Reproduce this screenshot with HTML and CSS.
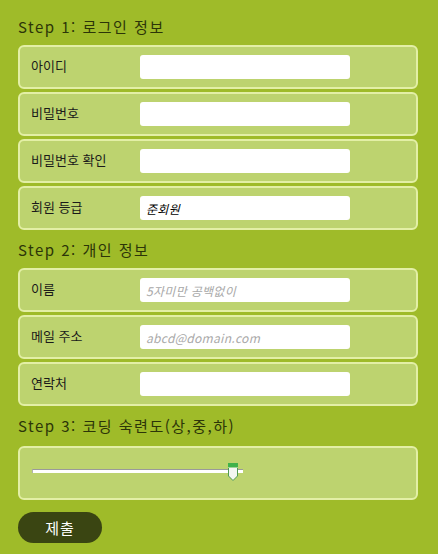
FILE: index.html
```html
<!DOCTYPE html>
<html lang="ko">
<head>
<meta charset="utf-8">
<link rel="stylesheet" href="styles.css">
</head>
<body>
<form class="form">
  <h2 class="step">Step 1: 로그인 정보</h2>
  <div class="row"><label class="lbl">아이디</label><input class="field" type="text"></div>
  <div class="row"><label class="lbl">비밀번호</label><input class="field" type="password"></div>
  <div class="row"><label class="lbl">비밀번호 확인</label><input class="field" type="password"></div>
  <div class="row"><label class="lbl">회원 등급</label><input class="field filled" type="text" value="준회원"></div>

  <h2 class="step">Step 2: 개인 정보</h2>
  <div class="row"><label class="lbl">이름</label><input class="field" type="text" placeholder="5자미만 공백없이"></div>
  <div class="row"><label class="lbl">메일 주소</label><input class="field" type="text" placeholder="abcd@domain.com"></div>
  <div class="row"><label class="lbl">연락처</label><input class="field" type="text"></div>

  <h2 class="step">Step 3: 코딩 숙련도(상,중,하)</h2>
  <div class="row slider-row">
    <div class="slider">
      <div class="track"></div>
      <svg class="thumb" width="12" height="20" viewBox="0 0 12 20">
        <path d="M1.5 1.5 H10.5 V14 L6 18.5 L1.5 14 Z" fill="#f4f6f2" stroke="#4f9a52" stroke-width="1"/>
        <rect x="1" y="1" width="10" height="4" fill="#3fb24a"/>
        <rect x="1" y="5" width="10" height="1" fill="#9fd39a"/>
      </svg>
    </div>
  </div>

  <button class="submit" type="button">제출</button>
</form>
</body>
</html>
```
FILE: styles.css
```css
html, body {
  margin: 0;
  padding: 0;
  background: #9fbb29;
}
body {
  font-family: "Noto Sans CJK KR", "Noto Sans", sans-serif;
  color: #1f2a05;
}
.form {
  width: 400px;
  padding: 7px 0 0 18px;
  display: flex;
  flex-direction: column;
  gap: 3px;
}
.step {
  margin: 0 0 -3px 0;
  height: 38px;
  display: flex;
  align-items: center;
  font-size: 15px;
  font-weight: normal;
  color: #2c3508;
  letter-spacing: 1.5px;
}
.form > .step:not(:first-child) {
  margin-top: -3px;
}
.row {
  box-sizing: border-box;
  height: 44px;
  border: 2px solid #e3efa6;
  border-radius: 6px;
  background: #bdd36f;
  display: flex;
  align-items: center;
  padding-left: 11px;
}
.lbl {
  width: 109px;
  font-size: 13px;
  line-height: 16px;
  margin-top: -2px;
  color: #1a1a1a;
}
.field {
  box-sizing: border-box;
  width: 210px;
  height: 24px;
  border: none;
  border-radius: 3px;
  background: #ffffff;
  padding: 0 6px;
  font-family: "Noto Sans CJK KR", sans-serif;
  font-size: 12px;
  font-style: italic;
  letter-spacing: 0.3px;
  color: #000;
  outline: none;
}
.field::placeholder {
  color: #a8a8a8;
  font-style: italic;
}
.slider-row {
  height: 54px;
  margin-top: 2px;
  padding-left: 12px;
  padding-bottom: 4px;
}
.slider {
  position: relative;
  width: 212px;
  height: 20px;
  display: flex;
  align-items: center;
}
.track {
  width: 210px;
  height: 3px;
  background: #ffffff;
  border-top: 1px solid #9a9a9a;
  border-left: 1px solid #b0b0b0;
}
.thumb {
  position: absolute;
  left: 195px;
  top: 1px;
}
.submit {
  margin-top: 9px;
  width: 84px;
  height: 31px;
  border: none;
  border-radius: 16px;
  background: #3a4512;
  color: #ffffff;
  font-family: "Noto Sans CJK KR", sans-serif;
  font-size: 15px;
  letter-spacing: 1px;
}
```
